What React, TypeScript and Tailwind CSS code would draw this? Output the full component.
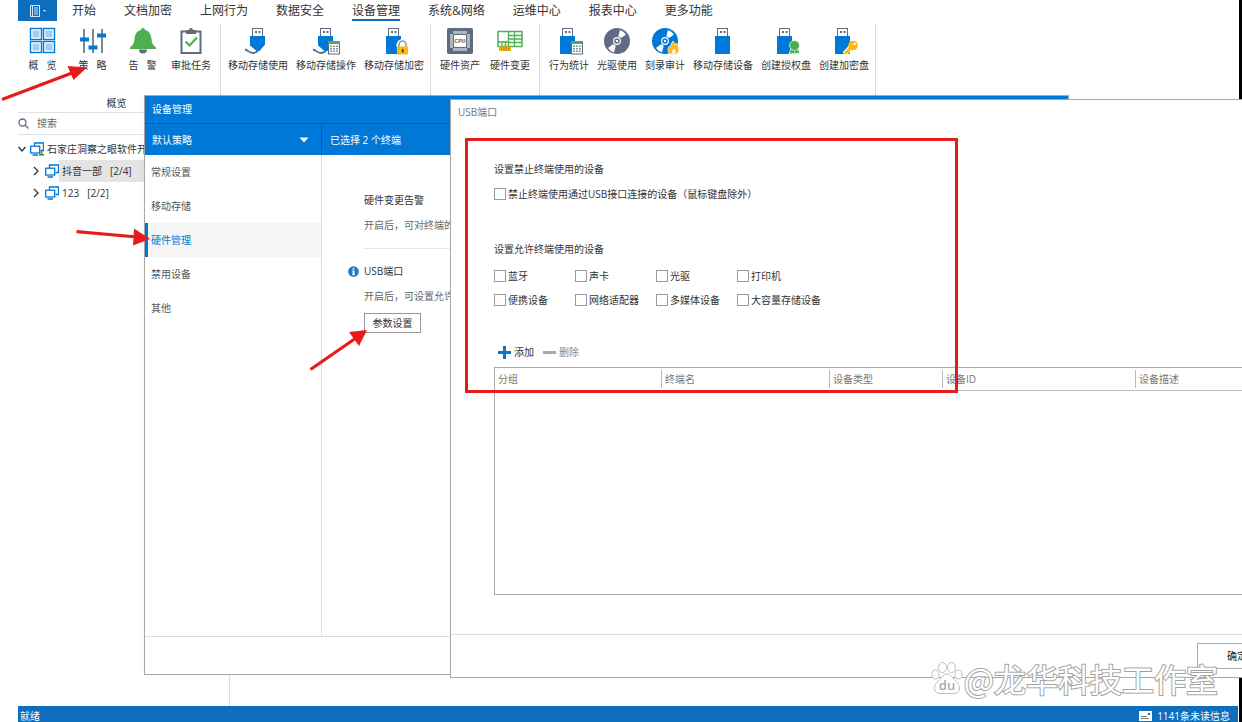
import type { ReactNode } from "react";
import { clsx } from "clsx";

const BLUE = "#0078d7";
const SLATE = "#5f6b80";
const GREEN = "#4caf50";
const AMBER = "#fdb813";

function Icon({ children }: { children: ReactNode }) {
  return (
    <svg width="28" height="28" viewBox="0 0 28 28" fill="none" aria-hidden="true">
      {children}
    </svg>
  );
}

function UsbPlug() {
  return (
    <>
      <rect x="8.500" y="1.500" width="10" height="8" fill="#fff" stroke={SLATE} />
      <path d="M11 4h2v2h-2zM14.500 4h2v2h-2z" fill={SLATE} />
    </>
  );
}

function CableUsb() {
  return (
    <>
      <path d="M1 22.500c3 .5 4 3.500 8 3.500 2 0 4-1 5-3" stroke={SLATE} strokeWidth="1.800" />
      <UsbPlug />
      <path d="M6 9h15v8.500L15.500 24h-3L6 18.500z" fill={BLUE} />
    </>
  );
}

function StickUsb() {
  return (
    <>
      <UsbPlug />
      <path d="M6 9h15v18H6z" fill={BLUE} />
    </>
  );
}

function SheetBadge() {
  return (
    <>
      <rect x="16.500" y="14.500" width="11" height="12.500" fill="#fff" stroke={SLATE} />
      <path d="M16 14h12v3H16z" fill={GREEN} />
      <path
        d="M18 18.500h2v1.500h-2zM21 18.500h2v1.500h-2zM24 18.500h2v1.500h-2zM18 21h2v1.500h-2zM21 21h2v1.500h-2zM24 21h2v1.500h-2zM18 23.500h2V25h-2zM21 23.500h2V25h-2zM24 23.500h2V25h-2z"
        fill="#8b95a5"
      />
    </>
  );
}

function Disc({ color }: { color: string }) {
  return (
    <>
      <circle cx="14" cy="14" r="13" fill={color} />
      <path d="M14 14 17 3a11.500 11.500 0 0 1 6 4.500zM14 14 5 21a11.500 11.500 0 0 0 6 4.500z" fill="#fff" />
      <circle cx="14" cy="14" r="4.800" fill={color} />
      <circle cx="14" cy="14" r="3.300" fill={color} stroke="#fff" strokeWidth="1.200" />
      <circle cx="14" cy="14" r="1.200" fill="#fff" />
    </>
  );
}

const icons: Record<string, ReactNode> = {
  overview: (
    <>
      {[2, 15].map((x) =>
        [2, 15].map((y) => (
          <g key={`${x}-${y}`}>
            <rect x={x - 0.5} y={y - 0.5} width="11" height="11" fill="#fff" stroke={BLUE} strokeWidth="1.400" />
            <rect x={x + 1.5} y={y + 1.5} width="7" height="7" fill="#9fcdf8" />
          </g>
        )),
      )}
    </>
  ),
  policy: (
    <>
      <path d="M5 2v24M14 2v24M23 2v24" stroke={SLATE} strokeWidth="1.600" />
      <path d="M1 10.500h9v4H1zM9.500 18.500h9v4h-9zM18 6.500h9v4h-9z" fill={BLUE} />
    </>
  ),
  alert: (
    <>
      <path d="M10 22.500h8a4 4 0 0 1-8 0z" fill={SLATE} />
      <path d="M14 1a2 2 0 0 1 2 2c4.500 1 6 4.500 6.500 9 .4 4.500 1.500 6 4.500 8.500V22H1v-1.500C4 18 5 16.500 5.500 12 6 7.500 7.500 4 12 3a2 2 0 0 1 2-2z" fill={GREEN} />
    </>
  ),
  tasks: (
    <>
      <rect x="4.500" y="4.500" width="19" height="21.500" stroke={SLATE} strokeWidth="2" />
      <path d="M9 3h3a2 2 0 0 1 4 0h3v4H9z" fill={SLATE} />
      <path d="m8.500 14.500 4 4 7.500-8" stroke={GREEN} strokeWidth="2.200" />
    </>
  ),
  cable: <CableUsb />,
  cableSheet: (
    <>
      <CableUsb />
      <SheetBadge />
    </>
  ),
  lock: (
    <>
      <StickUsb />
      <path d="M18.500 20v-2a4 4 0 0 1 8 0v2" fill="#fff" stroke="#fff" strokeWidth="4" />
      <path d="M19 20v-2.500a3.500 3.500 0 0 1 7 0V20" stroke="#9a9a9a" strokeWidth="1.600" />
      <rect x="17" y="19.500" width="11" height="8" fill={AMBER} />
      <path d="M22 22h1.500v3.500H22z" fill="#333" />
    </>
  ),
  cpu: (
    <>
      <rect x="1" y="1" width="26" height="26" rx="1.500" fill={SLATE} />
      <path d="M7.500 5.500h13M7.500 22.500h13" stroke="#fff" strokeWidth="3" strokeDasharray="1 1" />
      <path d="M5.500 7.500v13M22.500 7.500v13" stroke="#fff" strokeWidth="3" strokeDasharray="1 1" />
      <rect x="8" y="8" width="12" height="12" fill="#fff" />
      <text x="14" y="16" textAnchor="middle" fontSize="6" fontWeight="700" fontFamily="Liberation Mono, monospace" fill={SLATE}>
        CPU
      </text>
    </>
  ),
  board: (
    <>
      <rect x="2" y="4.500" width="24" height="15" fill="#fff" stroke={GREEN} strokeWidth="1.500" />
      <path d="M12.500 4v15.500M2 15h11M13 8.500h13M13 12h13M13 15.500h13M18.500 5v14M6 15v4M9.500 15v4" stroke={GREEN} strokeWidth="1.300" />
      <path d="M3 19.500h12V24H3z" fill={AMBER} />
      <path d="M5.500 20v4M8 20v4M10.500 20v4M13 20v4" stroke="#9a7410" strokeWidth="0.800" />
    </>
  ),
  stickSheet: (
    <>
      <g transform="translate(-1 0)">
        <StickUsb />
      </g>
      <SheetBadge />
    </>
  ),
  disc: <Disc color={SLATE} />,
  burn: (
    <>
      <Disc color={BLUE} />
      <path
        d="M22 14c1.500 1.500 1 3 2.500 4 .5-.8.400-1.500.3-2 2 2 3.200 4.500 3.200 7 0 2.500-2 4.500-5.500 4.500S17 25.500 17 23c0-1.800.8-3 1.500-4 .2.800.6 1.300 1.200 1.500-.2-2.500.8-4.500 2.300-6.500z"
        fill={AMBER}
        stroke="#fff"
        strokeWidth="0.700"
      />
      <path d="M22.500 27c-1.500-.5-2-2-1.200-3.200l1.500-2.300c1.500 1.500 2.200 2.500 1.700 4-.3.900-1 1.300-2 1.500z" fill="#fff" />
    </>
  ),
  stick: <StickUsb />,
  award: (
    <>
      <g transform="translate(-1 0)">
        <StickUsb />
      </g>
      <path d="m19 21-2 6 3-1 1.500 1.500 1-2 1 2L25 26l3 1-2-6z" fill={GREEN} stroke="#fff" strokeWidth="0.700" />
      <circle cx="22.500" cy="18.500" r="5" fill={GREEN} stroke="#fff" strokeWidth="0.700" />
    </>
  ),
  key: (
    <>
      <g transform="translate(-1 0)">
        <StickUsb />
      </g>
      <path d="m21 20-6.500 7" stroke="#fff" strokeWidth="5" />
      <circle cx="23" cy="18.500" r="4.800" fill={AMBER} />
      <path d="m21 20.500-6 6M17.500 24l2 2" stroke={AMBER} strokeWidth="2.800" />
      <circle cx="24.500" cy="17" r="1.300" fill="#fff" />
    </>
  ),
};

type Action = { icon: string; label: string };

const ribbon: { pad: string; actions: Action[] }[] = [
  {
    pad: "gap-[7px] pl-[3px] pr-[9px]",
    actions: [
      { icon: "overview", label: "概   览" },
      { icon: "policy", label: "策   略" },
      { icon: "alert", label: "告   警" },
      { icon: "tasks", label: "审批任务" },
    ],
  },
  {
    pad: "gap-2 pl-[7px] pr-[6px]",
    actions: [
      { icon: "cable", label: "移动存储使用" },
      { icon: "cableSheet", label: "移动存储操作" },
      { icon: "lock", label: "移动存储加密" },
    ],
  },
  {
    pad: "gap-[10px] px-[9px]",
    actions: [
      { icon: "cpu", label: "硬件资产" },
      { icon: "board", label: "硬件变更" },
    ],
  },
  {
    pad: "gap-2 pl-[9px] pr-[6px]",
    actions: [
      { icon: "stickSheet", label: "行为统计" },
      { icon: "disc", label: "光驱使用" },
      { icon: "burn", label: "刻录审计" },
      { icon: "stick", label: "移动存储设备" },
      { icon: "award", label: "创建授权盘" },
      { icon: "key", label: "创建加密盘" },
    ],
  },
];

const tabs = ["开始", "文档加密", "上网行为", "数据安全", "设备管理", "系统&网络", "运维中心", "报表中心", "更多功能"];
const settings = ["常规设置", "移动存储", "硬件管理", "禁用设备", "其他"];
const allowed = ["蓝牙", "声卡", "光驱", "打印机", "便携设备", "网络适配器", "多媒体设备", "大容量存储设备"];

function Ribbon() {
  return (
    <header>
      <nav className="flex h-[21px] items-stretch">
        <button type="button" aria-label="菜单" className="mr-[15px] flex w-[39px] items-center justify-center bg-[#0f6dbd]">
          <svg width="18" height="12" viewBox="0 0 18 12" fill="none" aria-hidden="true">
            <path d="M1.500.5h9v11h-9z" stroke="#d5e6f5" />
            <path d="M3.500 1v10M5 3h4M5 5h4M5 7h4M5 9h4" stroke="#d5e6f5" />
            <path d="M14 5h3l-1.500 2z" fill="#d5e6f5" />
          </svg>
        </button>
        <div className="flex gap-7">
          {tabs.map((tab) => (
            <button
              key={tab}
              type="button"
              className={clsx(
                "border-b-2 pt-[2px] text-xs leading-[17px] whitespace-nowrap text-[#333]",
                tab === "设备管理" ? "border-[#0f6dbd]" : "border-transparent",
              )}
            >
              {tab}
            </button>
          ))}
        </div>
      </nav>
      <div className="mt-[3px] flex h-[72px]">
        {ribbon.map((group, i) => (
          <div key={i} className={clsx("flex items-start border-r border-[#dcdcdc] pt-[3px]", group.pad)}>
            {group.actions.map((a) => (
              <button
                key={a.label}
                type="button"
                className={clsx("flex flex-col items-center gap-[2px]", a.label.includes(" ") && "w-[43px]")}
              >
                <Icon>{icons[a.icon]}</Icon>
                <span className="leading-4 whitespace-pre text-[#333]">{a.label}</span>
              </button>
            ))}
          </div>
        ))}
      </div>
    </header>
  );
}

function Monitors({ root = false }: { root?: boolean }) {
  return (
    <svg width="14" height="14" viewBox="0 0 14 14" fill="none" stroke={BLUE} strokeWidth="1.300" aria-hidden="true">
      <path d="M4.500 4V1h9v7.500h-3" />
      <rect x="0.700" y="4.200" width="9" height="6.800" fill="#fff" />
      <path d="M2.500 13h5.500" strokeWidth="1.500" />
      {root && <path d="M11.500 9v4M9 12.800h5" stroke="#2e8b3d" strokeWidth="1.500" />}
    </svg>
  );
}

function Chevron({ open = false }: { open?: boolean }) {
  return (
    <svg width="8" height="10" viewBox="0 0 8 10" fill="none" stroke="#333" strokeWidth="1.300" aria-hidden="true">
      {open ? <path d="m0.500 3 3.500 4 3.500-4" /> : <path d="m2 1 4 4-4 4" />}
    </svg>
  );
}

function Sidebar() {
  return (
    <aside className="flex w-[212px] flex-col border-r border-[#dcdcdc]">
      <h2 className="h-4 pr-3.5 text-center leading-[14px]">概览</h2>
      <label className="flex h-[23px] items-center gap-2 border-y border-[#e0e0e0]">
        <svg width="11" height="11" viewBox="0 0 11 11" fill="none" stroke="#5f6b80" strokeWidth="1.300" aria-hidden="true">
          <circle cx="4.500" cy="4.500" r="3.500" />
          <path d="m7 7 3.500 3.500" />
        </svg>
        <input aria-label="搜索" placeholder="搜索" className="min-w-0 flex-1 bg-transparent outline-none placeholder:text-[#666]" />
      </label>
      <ul className="pt-[3px] leading-[22px] whitespace-nowrap">
        <li className="flex items-center overflow-hidden">
          <Chevron open />
          <span className="mr-[3px] ml-1 flex">
            <Monitors root />
          </span>
          石家庄洞察之眼软件开
        </li>
        <li className="flex items-center pl-[14px]">
          <Chevron />
          <span className="ml-[5px] flex">
            <Monitors />
          </span>
          <span className="flex-1 bg-[#e4e4e4] pl-[3px]">
            抖音一部<span className="ml-2">[2/4]</span>
          </span>
        </li>
        <li className="flex items-center pl-[14px]">
          <Chevron />
          <span className="ml-[5px] flex">
            <Monitors />
          </span>
          <span className="flex-1 pl-[3px]">
            123<span className="ml-2">[2/2]</span>
          </span>
        </li>
      </ul>
    </aside>
  );
}

function PolicyDialog() {
  return (
    <section className="absolute top-[95px] left-36 flex h-[580px] w-[925px] flex-col border border-[#a8a8a8] bg-white shadow-[0_0_8px_rgba(0,0,0,0.04)]">
      <h2 className="h-7 shrink-0 border-b border-[#0060b4] bg-[#0078d7] pl-[7px] leading-[26px] text-white">设备管理</h2>
      <div className="flex h-[31px] shrink-0 bg-[#0078d7] leading-8 text-white">
        <button type="button" className="flex w-[177px] items-center justify-between border-r border-[#0060b4] pr-3 pl-[7px]">
          默认策略
          <svg width="10" height="6" viewBox="0 0 10 6" aria-hidden="true">
            <path d="M0.500 0.500h9L5 5.500z" fill="#fff" />
          </svg>
        </button>
        <span className="pl-2">已选择 2 个终端</span>
      </div>
      <div className="flex min-h-0 flex-1">
        <nav className="flex w-[177px] flex-col border-r border-[#dcdcdc]">
          {settings.map((s) => (
            <button
              key={s}
              type="button"
              className={clsx(
                "h-[34px] border-l-[3px] pl-[3px] text-left",
                s === "硬件管理" ? "border-[#0078d7] bg-[#f5f5f5] text-[#0078d7]" : "border-transparent text-[#555]",
              )}
            >
              {s}
            </button>
          ))}
        </nav>
        <div className="flex-1 pt-9 pl-[26px] leading-[18px]">
          <div className="pl-4">
            <h3>硬件变更告警</h3>
            <p className="mt-[7px] text-[#666]">开启后，可对终端的</p>
          </div>
          <hr className="mt-[14px] mb-[13px] ml-4 border-[#e8e8e8]" />
          <h3 className="flex items-center gap-[5px]">
            <svg width="11" height="11" viewBox="0 0 11 11" aria-hidden="true">
              <circle cx="5.500" cy="5.500" r="5.300" fill="#0f7fcf" />
              <path d="M4.700 2h1.700v1.500H4.700zM4 4.500h2.400v3.300H7V9H4V7.800h.7V5.600H4z" fill="#fff" />
            </svg>
            USB端口
          </h3>
          <div className="pl-4">
            <p className="mt-[7px] text-[#666]">开启后，可设置允许</p>
            <button type="button" className="mt-2 h-5 w-[57px] border border-[#999] bg-white">
              参数设置
            </button>
          </div>
        </div>
      </div>
      <footer className="h-[38px] shrink-0 border-t border-[#dcdcdc]" />
    </section>
  );
}

function Check({ label }: { label: string }) {
  return (
    <label className="flex items-center gap-[2px] whitespace-nowrap">
      <input type="checkbox" className="size-3 shrink-0 appearance-none border border-[#999] bg-white checked:bg-[#0078d7]" />
      {label}
    </label>
  );
}

function UsbDialog() {
  return (
    <section className="absolute top-[99px] right-[-60px] left-[450px] flex h-[579px] flex-col border border-[#a8a8a8] bg-white">
      <h2 className="pt-[3px] pl-[7px] leading-[18px] text-[#777]">USB端口</h2>
      <div className="flex flex-1 flex-col px-[43px] pt-[39px]">
        <h3 className="leading-[18px]">设置禁止终端使用的设备</h3>
        <div className="mt-2 leading-4">
          <Check label="禁止终端使用通过USB接口连接的设备（鼠标键盘除外）" />
        </div>
        <h3 className="mt-[38px] leading-[18px]">设置允许终端使用的设备</h3>
        <div className="mt-[10px] grid grid-cols-[repeat(4,81px)] gap-y-2 leading-4">
          {allowed.map((a) => (
            <Check key={a} label={a} />
          ))}
        </div>
        <div className="mt-9 flex gap-[9px] pl-1 leading-4">
          <button type="button" className="flex items-center gap-[3px]">
            <svg width="13" height="13" viewBox="0 0 13 13" aria-hidden="true">
              <path d="M6.500 0v13M0 6.500h13" stroke={BLUE} strokeWidth="3" />
            </svg>
            添加
          </button>
          <button type="button" className="flex items-center gap-[3px] text-[#888]">
            <svg width="13" height="13" viewBox="0 0 13 13" aria-hidden="true">
              <path d="M0 6.500h13" stroke="#aaa" strokeWidth="3" />
            </svg>
            删除
          </button>
        </div>
        <div className="mt-[7px] h-[228px] border border-[#aaa]">
          <table className="w-full table-fixed border-collapse text-left text-[#777]">
            <colgroup>
              <col className="w-[166px]" />
              <col className="w-[168px]" />
              <col className="w-[113px]" />
              <col className="w-[193px]" />
              <col />
            </colgroup>
            <thead>
              <tr className="h-[22px] border-b border-[#bbb]">
                {["分组", "终端名", "设备类型", "设备ID", "设备描述"].map((h, i) => (
                  <th key={h} className="p-0 font-normal">
                    <span className={clsx("block leading-[18px]", i === 0 ? "pl-[3px]" : "border-l border-[#bbb] pl-[3px]")}>{h}</span>
                  </th>
                ))}
              </tr>
            </thead>
          </table>
        </div>
      </div>
      <footer className="flex h-[43px] shrink-0 items-start justify-end border-t border-[#dcdcdc] pt-2 pr-6">
        <button type="button" className="h-[26px] w-20 border border-[#aaa] bg-white text-[#222]">
          确定
        </button>
      </footer>
    </section>
  );
}

function Annotations() {
  return (
    <>
      <div className="pointer-events-none absolute top-[138px] left-[465px] h-[255px] w-[493px] border-[3px] border-[#e81b1b]" />
      <svg width="400" height="400" viewBox="0 0 400 400" className="pointer-events-none absolute top-0 left-0" aria-hidden="true">
        <g stroke="#e81b1b" strokeWidth="3.200">
          <path d="M2 99.500 72 73M76.500 231.700 137 237M310.500 369.500 356 338" />
        </g>
        <path d="M87 67.500 67.500 66 73.500 80zM150 239l-16-10.500-1 17zM367 330l-18 2 10 14z" fill="#e81b1b" />
      </svg>
    </>
  );
}

function Watermark() {
  return (
    <div className="pointer-events-none absolute right-6 bottom-6 flex items-center">
      <svg width="32" height="34" viewBox="0 0 32 34" fill="#fff" stroke="#bdbdbd" strokeWidth="1" aria-hidden="true">
        <ellipse cx="11.500" cy="6.500" rx="4" ry="5" />
        <ellipse cx="20.500" cy="6.500" rx="4" ry="5" />
        <ellipse cx="4.500" cy="13.500" rx="3.500" ry="4.500" />
        <ellipse cx="27.500" cy="13.500" rx="3.500" ry="4.500" />
        <path d="M16 13c4 0 5.500 4 8 6.500s5 5 4.500 8.500c-.5 3-2.500 4.500-5.500 4.500H9c-3 0-5-1.500-5.500-4.500C3 24.500 5.500 22 8 19.500s4-6.500 8-6.500z" />
        <text x="16" y="29" textAnchor="middle" fontSize="13" fontWeight="600" fill="#aaa" stroke="none" fontFamily="Open Sans, sans-serif">
          du
        </text>
      </svg>
      <span className="pl-px font-['Noto_Sans_CJK_SC',sans-serif] text-[32px] leading-10 whitespace-nowrap text-white [-webkit-text-stroke:2px_#a3a3a3] [paint-order:stroke_fill]">
        @龙华科技工作室
      </span>
    </div>
  );
}

export default function App() {
  return (
    <div className="relative flex h-screen overflow-hidden bg-white font-['Open_Sans','Noto_Sans_CJK_SC',sans-serif] text-[10px] text-[#333]">
      <main className="ml-[18px] flex min-w-0 flex-1 flex-col">
        <Ribbon />
        <div className="flex min-h-0 flex-1">
          <Sidebar />
        </div>
        <footer className="flex h-4 shrink-0 justify-between bg-[#0f6dbd] pt-[5px] pr-2 pl-[2px] leading-[10px] text-white">
          <span>就绪</span>
          <span className="flex gap-[5px]">
            <svg width="13" height="10" viewBox="0 0 13 10" aria-hidden="true">
              <path d="M0 0h13v10H0z" fill="#fff" />
              <path d="M9 2h2v2H9z" fill={BLUE} />
              <path d="M2 5.500h6M2 7.500h8" stroke="#777" />
            </svg>
            1141条未读信息
          </span>
        </footer>
      </main>
      <div className="ml-px w-[3px] bg-black" />
      <PolicyDialog />
      <UsbDialog />
      <Annotations />
      <Watermark />
    </div>
  );
}
